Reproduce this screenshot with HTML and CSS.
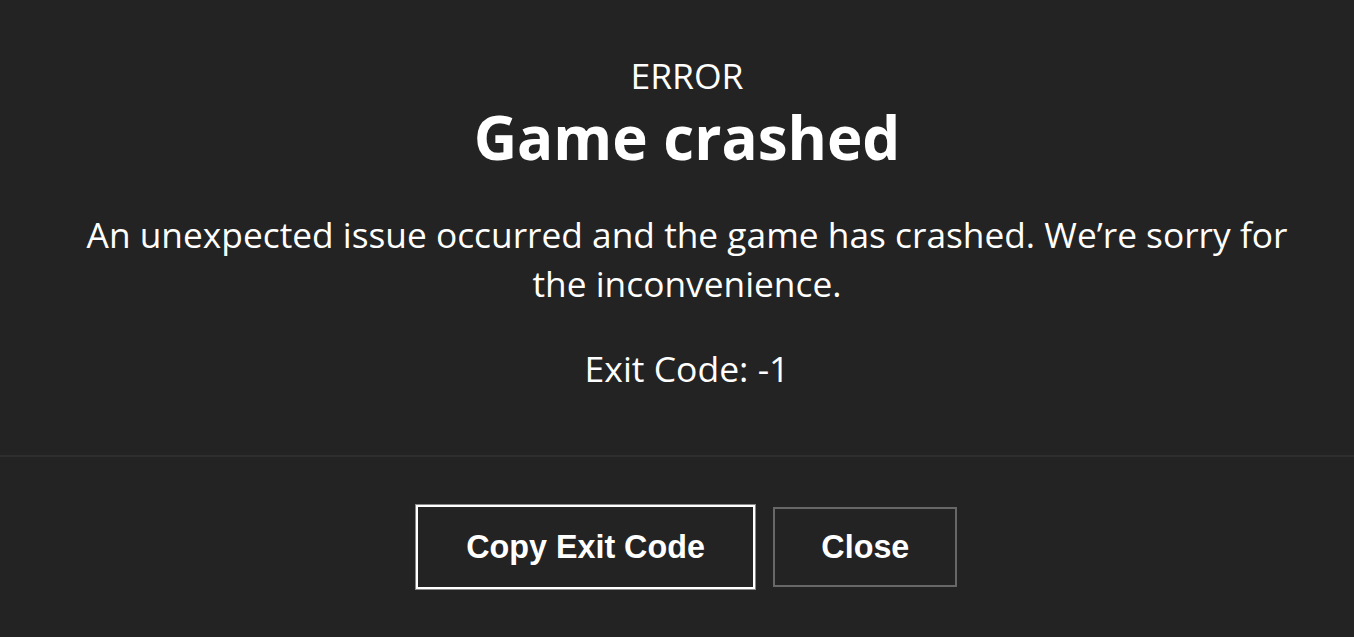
FILE: index.html
```html
<!DOCTYPE html>
<html lang="en">
<head>
<meta charset="utf-8">
<title>Game crashed</title>
<link rel="stylesheet" href="styles.css">
</head>
<body>
<div class="dialog">
  <div class="dialog-body">
    <div class="eyebrow">ERROR</div>
    <h1 class="title">Game crashed</h1>
    <p class="message">An unexpected issue occurred and the game has crashed. We’re sorry for the inconvenience.</p>
    <p class="exit-code">Exit Code: -1</p>
  </div>
  <div class="dialog-footer">
    <button class="btn btn-primary" type="button">Copy Exit Code</button>
    <button class="btn btn-secondary" type="button">Close</button>
  </div>
</div>
</body>
</html>
```
FILE: styles.css
```css
html, body {
  margin: 0;
  padding: 0;
  background: #232323;
  height: 100%;
}
body {
  color: #ffffff;
  font-family: "Open Sans", "Noto Sans", sans-serif;
}
.dialog {
  display: flex;
  flex-direction: column;
  height: 637px;
}
.dialog-body {
  padding: 55px 50px 62px 70px;
  text-align: center;
  border-bottom: 2px solid #2e2e2e;
}
.eyebrow {
  font-size: 35.5px;
  line-height: 40px;
  font-weight: 400;
}
.title {
  margin: 6px 0 0;
  font-size: 60px;
  line-height: 72px;
  font-weight: 700;
}
.message {
  margin: 37px 0 0;
  font-size: 35.3px;
  line-height: 49px;
}
.exit-code {
  margin: 36px 0 0;
  font-size: 35.5px;
  line-height: 49px;
}
.dialog-footer {
  flex: 1;
  display: flex;
  justify-content: center;
  align-items: center;
  gap: 18px;
  padding-left: 19px;
}
.btn {
  font-family: "Liberation Sans", Arial, sans-serif;
  font-weight: 700;
  font-size: 32.3px;
  line-height: 37px;
  color: #ffffff;
  background: transparent;
  margin: 0;
  cursor: pointer;
}
.btn-primary {
  border: 2px solid #ffffff;
  outline: 1px solid #8a8a8a;
  padding: 21.5px 48.5px;
}
.btn-secondary {
  border: 2px solid #676767;
  padding: 19.5px 46px;
}
```
